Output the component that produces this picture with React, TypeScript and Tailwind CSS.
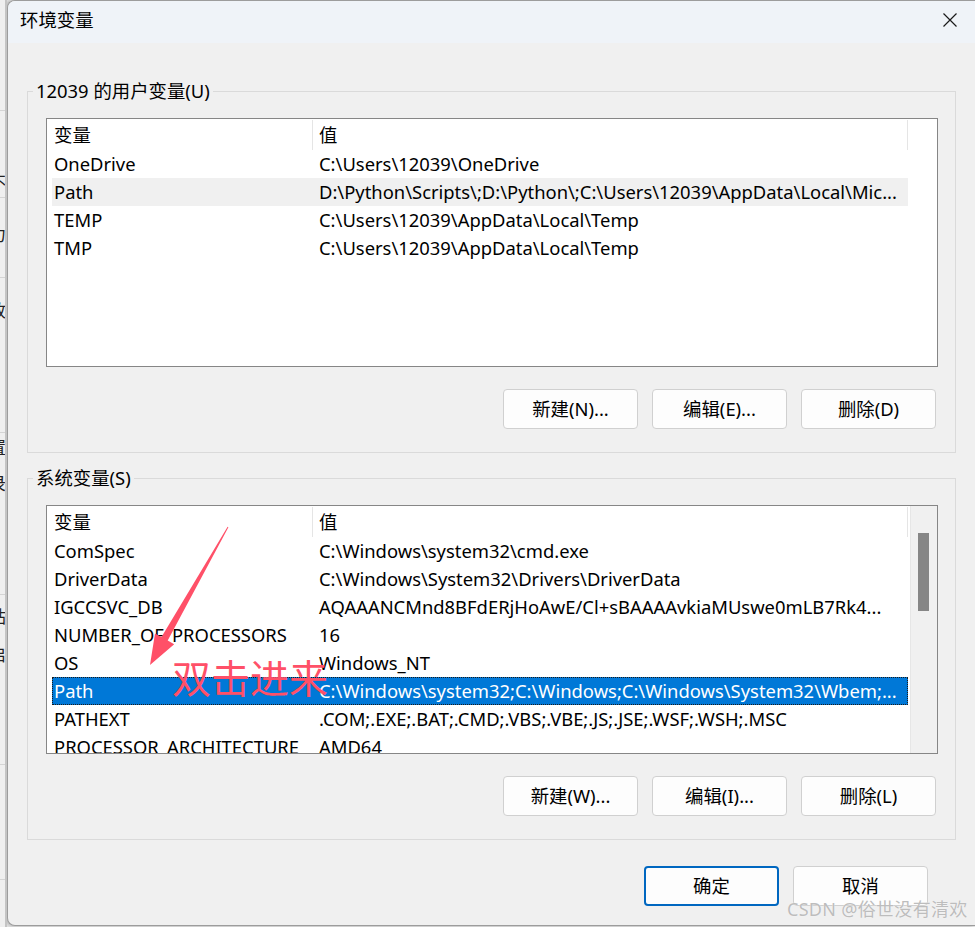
import React from 'react';

const FONT = "font-['Noto_Sans','Noto_Sans_CJK_SC',sans-serif]";

type Row = { name: string; value: string };

const USER_VARS: Row[] = [
  { name: 'OneDrive', value: 'C:\\Users\\12039\\OneDrive' },
  { name: 'Path', value: 'D:\\Python\\Scripts\\;D:\\Python\\;C:\\Users\\12039\\AppData\\Local\\Mic...' },
  { name: 'TEMP', value: 'C:\\Users\\12039\\AppData\\Local\\Temp' },
  { name: 'TMP', value: 'C:\\Users\\12039\\AppData\\Local\\Temp' },
];

const SYSTEM_VARS: Row[] = [
  { name: 'ComSpec', value: 'C:\\Windows\\system32\\cmd.exe' },
  { name: 'DriverData', value: 'C:\\Windows\\System32\\Drivers\\DriverData' },
  { name: 'IGCCSVC_DB', value: 'AQAAANCMnd8BFdERjHoAwE/Cl+sBAAAAvkiaMUswe0mLB7Rk4...' },
  { name: 'NUMBER_OF_PROCESSORS', value: '16' },
  { name: 'OS', value: 'Windows_NT' },
  { name: 'Path', value: 'C:\\Windows\\system32;C:\\Windows;C:\\Windows\\System32\\Wbem;...' },
  { name: 'PATHEXT', value: '.COM;.EXE;.BAT;.CMD;.VBS;.VBE;.JS;.JSE;.WSF;.WSH;.MSC' },
  { name: 'PROCESSOR_ARCHITECTURE', value: 'AMD64' },
];

// background window peeking out on the left edge
const PEEK = [
  { y: 172, ch: '不' },
  { y: 224, ch: '力' },
  { y: 300, ch: '改' },
  { y: 437, ch: '置' },
  { y: 473, ch: '录' },
  { y: 606, ch: '站' },
  { y: 644, ch: '启' },
];
const PEEK_LINES = [110, 197, 277, 432, 594, 764, 879];

function VarList({ rows, hoverIdx, selectedIdx, scroll }: { rows: Row[]; hoverIdx?: number; selectedIdx?: number; scroll?: boolean }) {
  return (
    <div className="relative w-[892px] h-[249px] border border-[#868686] bg-white overflow-hidden">
      <div className="flex h-[31px] items-center pl-[5px]">
        <div className="w-[261px] pl-[2px] border-r border-[#e5e5e5] h-[30px] flex items-center">变量</div>
        <div className="w-[595px] pl-[6px] border-r border-[#e5e5e5] h-[30px] flex items-center">值</div>
      </div>
      {rows.map((r, i) => {
        const sel = i === selectedIdx;
        const hov = i === hoverIdx;
        return (
          <div key={r.name} className="pl-[5px]">
            <div
              className={`flex h-[28px] items-center w-[856px] whitespace-nowrap ${sel ? 'bg-[#0078d7] text-white outline-1 outline-dotted outline-offset-[-1px] outline-[#1b1b1b]' : hov ? 'bg-[#f0f0f0]' : ''}`}
            >
              <div className="w-[261px] pl-[2px] overflow-hidden">{r.name}</div>
              <div className="w-[595px] pl-[6px] pr-[8px] truncate">{r.value}</div>
            </div>
          </div>
        );
      })}
      {scroll && (
        <div className="absolute right-0 top-0 bottom-0 w-[27px] bg-[#f0f0f0] border-l border-[#e6e6e6]">
          <div className="ml-[7px] mt-[27px] w-[11px] h-[78px] bg-[#868686]" />
        </div>
      )}
    </div>
  );
}

function Btn({ label, primary }: { label: string; primary?: boolean }) {
  return (
    <button
      className={`w-[135px] h-[40px] rounded-[4px] bg-[#fdfdfd] flex items-center justify-center ${primary ? 'border-2 border-[#0067c0]' : 'border border-[#d0d0d0]'}`}
    >
      {label}
    </button>
  );
}

function Group({ title, children }: { title: string; children: React.ReactNode }) {
  return (
    <fieldset className="w-[929px] border border-[#dadada] pl-[5px] pb-[23px]">
      <legend className="px-[3px] leading-[24px]">{title}</legend>
      <div className="ml-[13px] mt-[15px]">{children}</div>
    </fieldset>
  );
}

export default function App() {
  return (
    <div className={`relative w-[975px] h-[927px] overflow-hidden bg-[#e8e8e8] text-[18.4px] text-black ${FONT}`}>
      <div className="flex h-full">
        {/* sliver of the window behind */}
        <div className="relative w-[7px] h-full bg-[#efefef] overflow-hidden text-[17px]">
          {PEEK_LINES.map((y) => (
            <div key={y} className="absolute left-0 w-[7px] h-px bg-[#d4d4d4]" style={{ top: y }} />
          ))}
          {PEEK.map((p) => (
            <span key={p.y} className="absolute left-[-11px] leading-[22px] text-[#222]" style={{ top: p.y }}>
              {p.ch}
            </span>
          ))}
          <div className="absolute right-0 top-0 bottom-0 w-[2px] bg-[#c4c4c4]" />
        </div>

        {/* dialog */}
        <div className="flex-1 h-[926px] rounded-l-[8px] border-l border-b border-t border-[#9c9c9c] bg-[#f0f0f0] overflow-hidden shadow-[-2px_0_4px_rgba(0,0,0,0.25)]">
          <div className="h-[42px] bg-[#eff3f8] flex items-center justify-between pl-[12px] pr-[17px] pb-[4px]">
            <span className="leading-none">环境变量</span>
            <svg width="16" height="16" viewBox="0 0 16 16">
              <path d="M1.5 1.5 L14.5 14.5 M14.5 1.5 L1.5 14.5" stroke="#1a1a1a" strokeWidth="1.2" fill="none" />
            </svg>
          </div>

          <div className="pl-[19px] pt-[36px]">
            <Group title="12039 的用户变量(U)">
              <VarList rows={USER_VARS} hoverIdx={1} />
              <div className="flex justify-end gap-[14px] w-[890px] mt-[22px]">
                <Btn label="新建(N)..." />
                <Btn label="编辑(E)..." />
                <Btn label="删除(D)" />
              </div>
            </Group>

            <div className="mt-[13px]">
              <Group title="系统变量(S)">
                <VarList rows={SYSTEM_VARS} selectedIdx={5} scroll />
                <div className="flex justify-end gap-[14px] w-[890px] mt-[22px]">
                  <Btn label="新建(W)..." />
                  <Btn label="编辑(I)..." />
                  <Btn label="删除(L)" />
                </div>
              </Group>
            </div>

            <div className="flex justify-end gap-[14px] w-[901px] mt-[26px]">
              <Btn label="确定" primary />
              <Btn label="取消" />
            </div>
          </div>
        </div>
      </div>

      {/* red annotation */}
      <svg className="absolute left-0 top-0 pointer-events-none" width="975" height="927">
        <polygon
          points="227.6,526.8 161.5,637.1 155,633.4 150,665 174.2,644.2 167.7,640.5 228.4,527.2"
          fill="#ff5068"
        />
      </svg>
      <div className="absolute left-[172px] top-[650px] text-[39px] leading-[52px] text-[#ff5068] font-['Noto_Sans_CJK_SC',sans-serif]">
        双击进来
      </div>

      {/* watermark */}
      <div className="absolute left-[787px] top-[896px] text-[18px] leading-[26px] text-[#bdbdbd] tracking-[0.3px] [text-shadow:0_0_1px_#ffffff]">
        CSDN @俗世没有清欢
      </div>
    </div>
  );
}
